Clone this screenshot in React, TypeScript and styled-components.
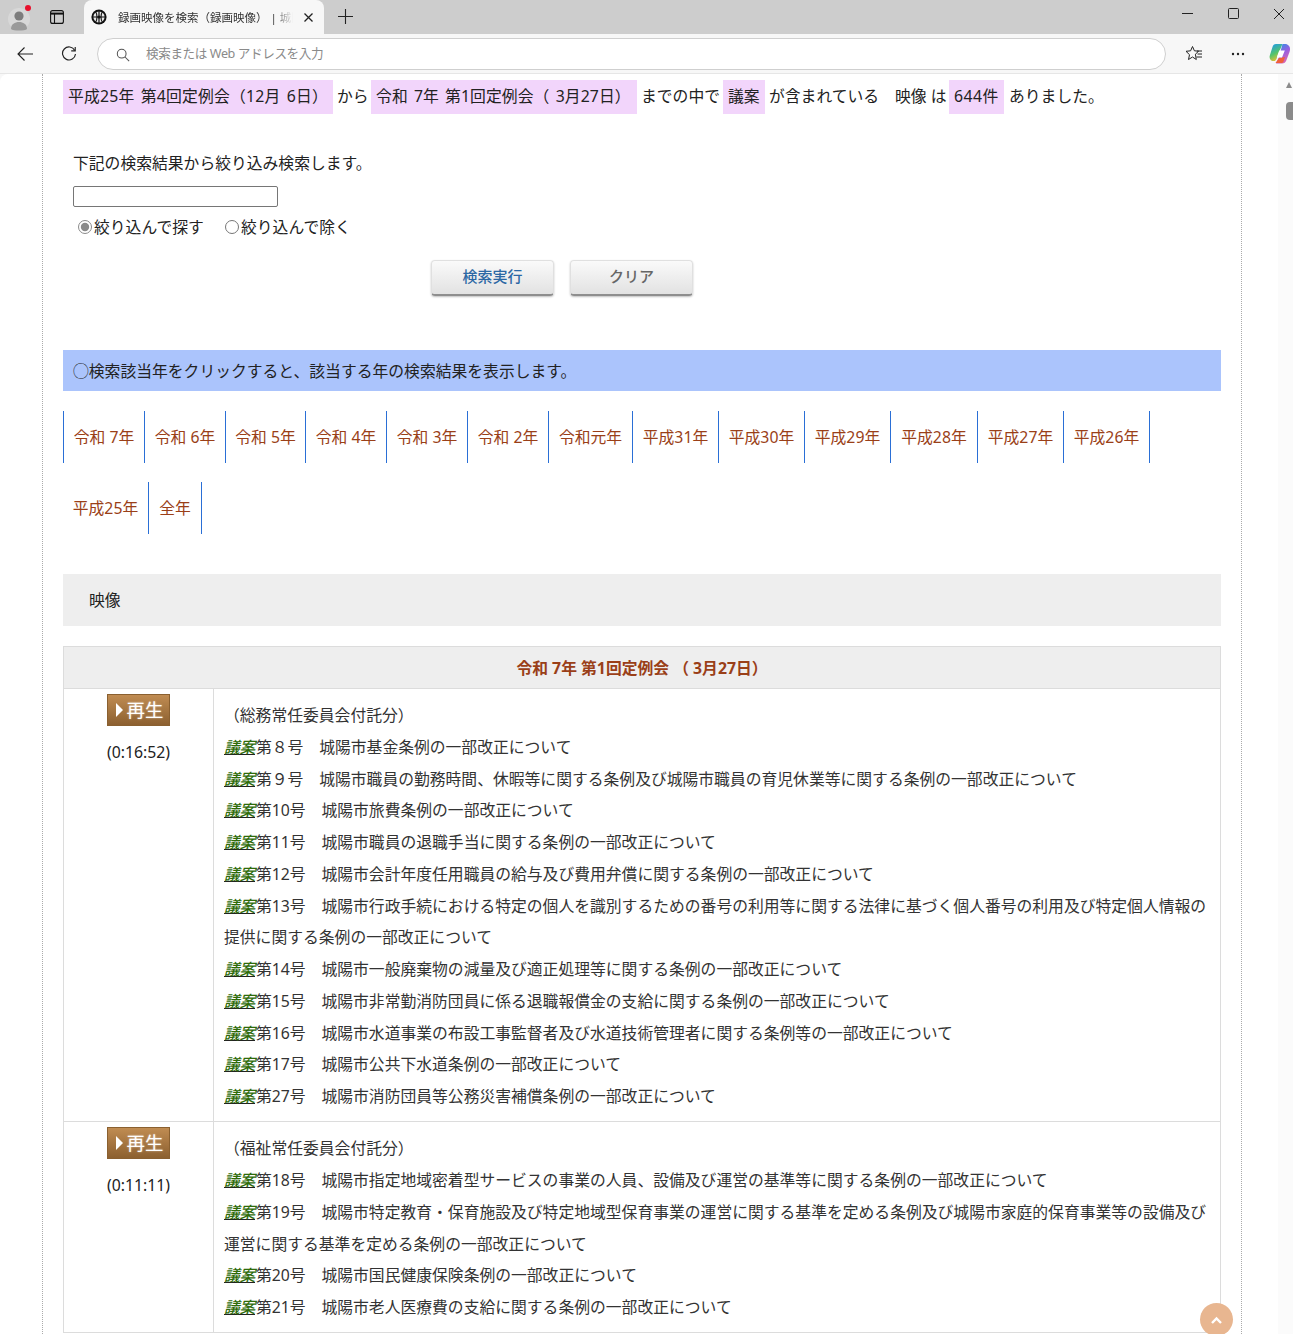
import React from "react";
import styled, { createGlobalStyle } from "styled-components";

const Global = createGlobalStyle`
  html, body { margin: 0; padding: 0; background: #f7f7f7; overflow: hidden; height: 1334px; }
  * { box-sizing: border-box; }
  body { font-family: "Noto Sans", "Noto Sans CJK JP", sans-serif; font-size: 15.8px; color: #222; }
`;

const Shell = styled.div`position: relative; width: 1293px; height: 1334px; overflow: hidden; background: #f7f7f7;`;
const TabStrip = styled.div`position: relative; height: 34px; background: #cdcdcd;`;
const ProfileIcon = styled.svg`position: absolute; left: 8px; top: 5px;`;
const ChromeIcon = styled.svg<{ $x: number; $y: number }>`position: absolute; left: ${p => p.$x}px; top: ${p => p.$y}px;`;
const Tab = styled.div`
  position: absolute; left: 84px; top: 0; width: 240px; height: 34px; background: #f7f7f7;
  border-radius: 8px 8px 0 0;
`;
const TabTitle = styled.span`
  position: absolute; left: 34px; top: 8px; width: 175px; height: 20px; overflow: hidden; white-space: nowrap;
  font-size: 11.5px; line-height: 20px; color: #333;
  mask-image: linear-gradient(90deg, #000 88%, transparent 100%);
`;
const UrlRow = styled.div`position: relative; height: 40px; background: #f7f7f7; border-bottom: 1px solid #e6e6e6;`;
const Omnibox = styled.div`
  position: absolute; left: 97px; top: 4px; width: 1069px; height: 32px; background: #fff;
  border: 1px solid #cfcfcf; border-radius: 16px;
`;
const Placeholder = styled.span`
  position: absolute; left: 48px; top: 6px; font-size: 12.6px; letter-spacing: -0.4px; line-height: 18px; color: #8a8a8a;
`;
const Viewport = styled.div`
  position: absolute; left: 0; top: 74px; width: 1293px; height: 1260px; background: #fff;
  border-radius: 8px 0 0 0; overflow: hidden;
`;
const Column = styled.div`
  position: absolute; left: 42px; top: 0; width: 1200px; height: 1260px;
  border-left: 1px dotted #aaa; border-right: 1px dotted #aaa;
`;
const Inner = styled.div`position: absolute; left: 20px; top: 0; width: 1158px;`;
const Summary = styled.div`
  position: absolute; top: 6px; left: 0; height: 34px; width: 1158px; line-height: 33px; white-space: nowrap;
`;
const Hit = styled.span<{ $x: number; $w: number; $ls?: number; $ws?: number }>`
  position: absolute; left: ${p => p.$x}px; width: ${p => p.$w}px; top: 0; height: 34px; padding-left: 5px;
  background: #f2d5fb; letter-spacing: ${p => p.$ls ?? 0}px; word-spacing: ${p => p.$ws ?? 0}px;
`;
const Plain = styled.span<{ $x: number }>`position: absolute; left: ${p => p.$x}px; top: 0;`;
const Lead = styled.p`position: absolute; left: 10px; top: 78px; margin: 0; line-height: 23px;`;
const FilterInput = styled.input`
  position: absolute; left: 10px; top: 112px; width: 205px; height: 21px; padding: 0 3px;
  border: 1px solid #767676; border-radius: 2px; background: #fff;
`;
const RadioRow = styled.label<{ $x: number }>`
  position: absolute; left: ${p => p.$x}px; top: 142px; height: 23px; line-height: 23px; display: flex; align-items: center;
`;
const Radio = styled.input`margin: -2px 2px 0 0; width: 14px; height: 14px; accent-color: #8a8a8a;`;
const ActionButton = styled.button<{ $x: number; $blue?: boolean }>`
  position: absolute; left: ${p => p.$x}px; top: 186px; width: 123px; height: 36px; padding: 0 0 4px;
  border: 1px solid #e0e0e0; border-bottom: 2px solid #8e8e8e; border-radius: 4px;
  background: linear-gradient(#fafafa, #e2e2e2); box-shadow: 0 1px 2px rgba(0,0,0,.25);
  font: 500 15px "Noto Sans CJK JP", sans-serif; color: ${p => (p.$blue ? "#2c68a4" : "#666")};
`;
const Notice = styled.div`
  position: absolute; left: 0; top: 276px; width: 1158px; height: 41px; padding-left: 10px;
  background: #abc4fc; line-height: 43px; color: #222;
`;
const YearRow = styled.div<{ $top: number }>`
  position: absolute; left: 0; top: ${p => p.$top}px; height: 52px; display: flex;
`;
const Year = styled.a<{ $w: number; $first?: boolean }>`
  display: block; width: ${p => p.$w}px; height: 52px; line-height: 52px; text-align: center; white-space: nowrap;
  color: #9a3f18; border-right: 1px solid #2a6fd6;
  ${p => (p.$first ? "border-left: 1px solid #2a6fd6;" : "")}
`;
const VideoHead = styled.div`
  position: absolute; left: 0; top: 500px; width: 1158px; height: 52px; padding-left: 26px;
  background: #eeeeee; line-height: 52px;
`;
const ResultTable = styled.div`
  position: absolute; left: 0; top: 572px; width: 1158px; border: 1px solid #dcdcdc; border-bottom: 0;
`;
const TableTitle = styled.div`
  height: 42px; background: #eeeeee; border-bottom: 1px solid #dcdcdc; text-align: center;
  font-weight: 700; line-height: 43px; color: #9a3f18;
`;
const Row = styled.div`display: flex; border-bottom: 1px solid #dcdcdc;`;
const PlayCell = styled.div`width: 150px; flex: none; border-right: 1px solid #dcdcdc; text-align: center; padding-top: 5px;`;
const PlayButton = styled.div`
  margin: 0 auto; width: 63px; height: 32px; padding: 0 0 0 2px; display: flex; align-items: center; justify-content: center; gap: 4px;
  background: linear-gradient(#c08c52, #8c6030); border: 1px solid #8a6030;
  color: #fff; font-size: 18.4px; font-weight: 400; line-height: 28px; text-shadow: 0 0 2px rgba(255,255,255,.6);
`;
const Arrow = styled.i`
  width: 0; height: 0; border-left: 7px solid #fff; border-top: 7px solid transparent; border-bottom: 7px solid transparent;
`;
const Duration = styled.div`margin-top: 14px; line-height: 24px;`;
const DocCell = styled.div`flex: 1; padding: 11.25px 10px 8.25px; line-height: 31.74px; color: #333;`;
const DocLine = styled.div``;
const Tag = styled.span`
  font-style: italic; font-weight: 500; color: #2e6b0a; text-decoration: underline; text-decoration-color: #222;
  text-underline-offset: 1px; letter-spacing: -0.3px; margin-right: 1px;
`;
const Track = styled.div`position: absolute; right: 0; top: 0; width: 15px; height: 1260px; background: #fbfbfb;`;
const ScrollThumb = styled.div`position: absolute; left: 8px; top: 28px; width: 7px; height: 18px; border-radius: 4px 0 0 4px; background: #8b8b8b;`;
const ScrollUp = styled.div`
  position: absolute; left: 8px; top: 8px; width: 0; height: 0;
  border-left: 3.5px solid transparent; border-right: 3.5px solid transparent; border-bottom: 6px solid #8b8b8b;
`;
const ToTop = styled.div`
  position: absolute; left: 1200px; top: 1229px; width: 33px; height: 33px; border-radius: 50%; background: #e8b690;
  display: flex; align-items: center; justify-content: center;
`;

const years1: [string, number, boolean?][] = [
  ["令和 7年", 82, true], ["令和 6年", 81], ["令和 5年", 80], ["令和 4年", 81], ["令和 3年", 81],
  ["令和 2年", 81], ["令和元年", 84], ["平成31年", 86], ["平成30年", 86], ["平成29年", 86],
  ["平成28年", 87], ["平成27年", 86], ["平成26年", 86],
];
const group1 = [
  "第８号　城陽市基金条例の一部改正について",
  "第９号　城陽市職員の勤務時間、休暇等に関する条例及び城陽市職員の育児休業等に関する条例の一部改正について",
  "第10号　城陽市旅費条例の一部改正について",
  "第11号　城陽市職員の退職手当に関する条例の一部改正について",
  "第12号　城陽市会計年度任用職員の給与及び費用弁償に関する条例の一部改正について",
  "第13号　城陽市行政手続における特定の個人を識別するための番号の利用等に関する法律に基づく個人番号の利用及び特定個人情報の提供に関する条例の一部改正について",
  "第14号　城陽市一般廃棄物の減量及び適正処理等に関する条例の一部改正について",
  "第15号　城陽市非常勤消防団員に係る退職報償金の支給に関する条例の一部改正について",
  "第16号　城陽市水道事業の布設工事監督者及び水道技術管理者に関する条例等の一部改正について",
  "第17号　城陽市公共下水道条例の一部改正について",
  "第27号　城陽市消防団員等公務災害補償条例の一部改正について",
];
const group2 = [
  "第18号　城陽市指定地域密着型サービスの事業の人員、設備及び運営の基準等に関する条例の一部改正について",
  "第19号　城陽市特定教育・保育施設及び特定地域型保育事業の運営に関する基準を定める条例及び城陽市家庭的保育事業等の設備及び運営に関する基準を定める条例の一部改正について",
  "第20号　城陽市国民健康保険条例の一部改正について",
  "第21号　城陽市老人医療費の支給に関する条例の一部改正について",
];

const Item = ({ text }: { text: string }) => (
  <DocLine><Tag>議案</Tag>{text}</DocLine>
);
const Play = ({ time }: { time: string }) => (
  <PlayCell>
    <PlayButton><Arrow />再生</PlayButton>
    <Duration>{time}</Duration>
  </PlayCell>
);

export default function App() {
  return (
    <Shell>
      <Global />
      <TabStrip>
        <ProfileIcon width="26" height="26" viewBox="0 0 26 26">
          <circle cx="11" cy="14" r="11" fill="#d8d8d8" />
          <circle cx="11" cy="11" r="4.6" fill="#7d7d7d" />
          <path d="M3 24c0-5 4-7 8-7s8 2 8 7c-2 2-14 2-16 0z" fill="#9a9a9a" />
          <circle cx="20" cy="3" r="3" fill="#e8112d" />
        </ProfileIcon>
        <ChromeIcon $x={50} $y={10} width="14" height="14" viewBox="0 0 14 14" fill="none" stroke="#111" strokeWidth="1.1">
          <rect x=".6" y=".6" width="12.8" height="12.8" rx="2" />
          <path d="M.6 3.6h12.8" strokeWidth="2" />
          <path d="M4.5 3.6v9.8" />
        </ChromeIcon>
        <Tab>
          <ChromeIcon $x={7} $y={9} width="16" height="16" viewBox="0 0 16 16">
            <circle cx="8" cy="8" r="7.6" fill="#111" />
            <circle cx="8" cy="8" r="5.6" fill="#e8e8e8" />
            <path d="M8 1v14M1.5 8h13" stroke="#111" strokeWidth="1.2" />
            <path d="M4.5 2.5c2 3 2 8 0 11M11.5 2.5c-2 3-2 8 0 11" stroke="#111" strokeWidth="1.1" fill="none" />
            <circle cx="8" cy="8" r="1.6" fill="#111" />
          </ChromeIcon>
          <TabTitle>録画映像を検索（録画映像） | 城陽市</TabTitle>
          <ChromeIcon $x={220} $y={13} width="9" height="9" viewBox="0 0 9 9" stroke="#222" strokeWidth="1.3">
            <path d="M.5.5l8 8M8.5.5l-8 8" />
          </ChromeIcon>
        </Tab>
        <ChromeIcon $x={338} $y={9} width="15" height="15" viewBox="0 0 15 15" stroke="#222" strokeWidth="1.1">
          <path d="M7.5 0v15M0 7.5h15" />
        </ChromeIcon>
        <ChromeIcon $x={1182} $y={13} width="11" height="2" viewBox="0 0 11 2" stroke="#222"><path d="M0 .5h11" /></ChromeIcon>
        <ChromeIcon $x={1228} $y={8} width="11" height="11" viewBox="0 0 11 11" fill="none" stroke="#222">
          <rect x=".5" y=".5" width="10" height="10" rx="1" />
        </ChromeIcon>
        <ChromeIcon $x={1274} $y={9} width="10" height="10" viewBox="0 0 10 10" stroke="#222"><path d="M0 0l10 10M10 0L0 10" /></ChromeIcon>
      </TabStrip>
      <UrlRow>
        <ChromeIcon $x={17} $y={13} width="16" height="14" viewBox="0 0 16 14" fill="none" stroke="#222" strokeWidth="1.1">
          <path d="M16 7H1M7.5.5L1 7l6.5 6.5" />
        </ChromeIcon>
        <ChromeIcon $x={61} $y={12} width="16" height="16" viewBox="0 0 18 18" fill="none" stroke="#222" strokeWidth="1.3">
          <path d="M15.5 5A7.3 7.3 0 1 0 16.3 9" />
          <path d="M16 1v4.5h-4.5" />
        </ChromeIcon>
        <Omnibox>
          <ChromeIcon $x={18} $y={9} width="14" height="14" viewBox="0 0 16 16" fill="none" stroke="#555" strokeWidth="1.2">
            <circle cx="6.5" cy="6.5" r="5" /><path d="M10 10l5 5" />
          </ChromeIcon>
          <Placeholder>検索または Web アドレスを入力</Placeholder>
        </Omnibox>
        <ChromeIcon $x={1185} $y={11} width="18" height="18" viewBox="0 0 18 18" fill="none" stroke="#222" strokeWidth="1">
          <path d="M7.5 1.5l1.9 4.3 4.2.4-3.2 3 .9 5.3-3.8-2.5-4 2.5 1-4.8L1 6.3l4.6-.5z" />
          <path d="M12 6h5M12.5 9h4.5M11.5 12h5.5" />
        </ChromeIcon>
        <ChromeIcon $x={1231} $y={18} width="14" height="4" viewBox="0 0 14 4" fill="#222">
          <circle cx="2" cy="2" r="1.2" /><circle cx="7" cy="2" r="1.2" /><circle cx="12" cy="2" r="1.2" />
        </ChromeIcon>
        <ChromeIcon $x={1269} $y={9} width="22" height="21" viewBox="0 0 22 21">
          <defs>
            <linearGradient id="cpA" x1="0.2" y1="0" x2="0.6" y2="1"><stop offset="0" stopColor="#1e9be8" /><stop offset=".55" stopColor="#55c46a" /><stop offset="1" stopColor="#f5c12e" /></linearGradient>
            <linearGradient id="cpB" x1="0.3" y1="0" x2="0.8" y2="1"><stop offset="0" stopColor="#2f8fe6" /><stop offset=".45" stopColor="#9a5fe0" /><stop offset="1" stopColor="#e86aa8" /></linearGradient>
          </defs>
          <path d="M7 1h6.5L9 11.5 7.5 16 6 18H4.5C1.5 18 0 15.5 .8 12.5L3.5 4C4 2 5.2 1 7 1z" fill="url(#cpA)" />
          <path d="M13.5 1H16c3 0 5.5 2.5 5 6l-.5 2-3 8c-.8 2.4-2.4 3.5-4.5 3.5H7L10 14z" fill="url(#cpB)" />
          <path d="M6.5 20h5.5c1 0 2-.5 2.5-1.5L16 14l-6 1z" fill="#f0603a" />
          <path d="M10.2 7.5h5.6L13 14.5H7.8z" fill="#fff" />
        </ChromeIcon>
      </UrlRow>
      <Viewport>
        <Column>
          <Inner>
            <Summary>
              <Hit $x={0} $w={270} $ls={0.2} $ws={2}>平成25年 第4回定例会（12月 6日）</Hit>
              <Plain $x={274}>から</Plain>
              <Hit $x={308} $w={266} $ls={0.08} $ws={2}>令和 7年 第1回定例会（ 3月27日）</Hit>
              <Plain $x={578}>までの中で</Plain>
              <Hit $x={660} $w={42}>議案</Hit>
              <Plain $x={706}>が含まれている</Plain>
              <Plain $x={832}>映像 は</Plain>
              <Hit $x={886} $w={55} $ls={0.5}>644件</Hit>
              <Plain $x={946}>ありました。</Plain>
            </Summary>
            <Lead>下記の検索結果から絞り込み検索します。</Lead>
            <FilterInput aria-label="絞り込み" />
            <RadioRow $x={15}><Radio type="radio" name="mode" defaultChecked />絞り込んで探す</RadioRow>
            <RadioRow $x={162}><Radio type="radio" name="mode" />絞り込んで除く</RadioRow>
            <ActionButton $x={368} $blue>検索実行</ActionButton>
            <ActionButton $x={507}>クリア</ActionButton>
            <Notice>◯検索該当年をクリックすると、該当する年の検索結果を表示します。</Notice>
            <YearRow $top={337}>
              {years1.map(([t, w, f]) => <Year key={t} $w={w} $first={f}>{t}</Year>)}
            </YearRow>
            <YearRow $top={408}>
              <Year $w={86}>平成25年</Year>
              <Year $w={53}>全年</Year>
            </YearRow>
            <VideoHead>映像</VideoHead>
            <ResultTable>
              <TableTitle>令和 7年 第1回定例会 （ 3月27日）</TableTitle>
              <Row>
                <Play time="(0:16:52)" />
                <DocCell>
                  <DocLine>（総務常任委員会付託分）</DocLine>
                  {group1.map(t => <Item key={t} text={t} />)}
                </DocCell>
              </Row>
              <Row>
                <Play time="(0:11:11)" />
                <DocCell>
                  <DocLine>（福祉常任委員会付託分）</DocLine>
                  {group2.map(t => <Item key={t} text={t} />)}
                </DocCell>
              </Row>
            </ResultTable>
          </Inner>
        </Column>
        <Track><ScrollUp /><ScrollThumb /></Track>
        <ToTop>
          <svg width="11" height="8" viewBox="0 0 11 8" fill="none" stroke="#fff" strokeWidth="2.4"><path d="M1 7l4.5-4.5L10 7" /></svg>
        </ToTop>
      </Viewport>
    </Shell>
  );
}
